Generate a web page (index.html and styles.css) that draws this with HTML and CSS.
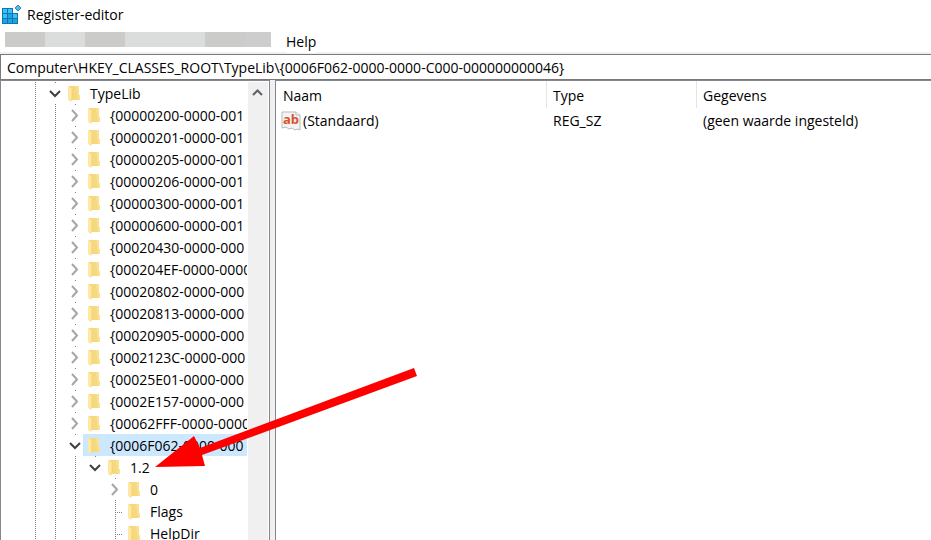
FILE: index.html
```html
<!DOCTYPE html>
<html lang="nl">
<head>
    <meta charset="UTF-8">
    <meta name="viewport" content="width=device-width, initial-scale=1.0">
    <title>Register-editor</title>
    <link rel="stylesheet" href="styles.css">
</head>
<body>

<svg class="defs" width="0" height="0">
    <symbol id="folder" viewBox="0 0 13 17">
        <path d="M1 1H11V10H12V15H4L1 12Z" fill="#f6d87f"/>
        <path d="M8 1H11V10H12V15H10Z" fill="#fae08f"/>
        <path d="M0 1L4 4V12L3 17L0 15Z" fill="#ffe8a2"/>
        <path d="M4 4V12L3 16" fill="none" stroke="#efcb6d" stroke-width="0.6"/>
    </symbol>
    <symbol id="closed" viewBox="0 0 16 20">
        <path d="M5 5L10 10.500L5 16" fill="none" stroke="#a6a6a6" stroke-width="2"/>
    </symbol>
    <symbol id="open" viewBox="0 0 16 20">
        <path d="M3 8L8 13L13 8" fill="none" stroke="#404040" stroke-width="2"/>
    </symbol>
</svg>

<header class="titlebar">
    <svg class="logo" width="20" height="20" viewBox="0 0 20 20">
        <path d="M0 3H11V8H16V19H0Z" fill="#0b78b4"/>
        <path d="M1 4H5V8H1ZM6 4H10V8H6ZM1 9H5V13H1ZM11 9H15V13H11Z" fill="#3fc0f2"/>
        <path d="M6 9H10V13H6ZM1 14H5V18H1ZM6 14H10V18H6ZM11 14H15V18H11Z" fill="#1ea5e0"/>
        <path d="M16 0L19 3L16 6L13 3Z" fill="#5ab6de" stroke="#2a8abd"/>
    </svg>
    <span>Register-editor</span>
</header>

<nav class="menubar">
    <div class="masked">
        <span class="dark"></span>
        <span class="light"></span>
        <span class="dark"></span>
        <span class="light"></span>
        <span class="light"></span>
        <span class="dark"></span>
        <span class="dark end"></span>
    </div>
    <button type="button">Help</button>
</nav>

<input class="address" type="text" aria-label="Adres" value="Computer\HKEY_CLASSES_ROOT\TypeLib\{0006F062-0000-0000-C000-000000000046}">

<main class="panes">
    <div class="tree">
        <ul class="root">
            <li>
                <div class="row"><button class="toggle" aria-label="Samenvouwen"><svg><use href="#open"/></svg></button><span class="label"><svg><use href="#folder"/></svg><span>TypeLib</span></span></div>
                <ul id="keys">
                    <li class="last-key last">
                        <div class="row"><button class="toggle" aria-label="Samenvouwen"><svg><use href="#open"/></svg></button><span class="label"><svg><use href="#folder"/></svg><span>1.2</span></span></div>
                        <ul>
                            <li><div class="row"><button class="toggle" aria-label="Uitvouwen"><svg><use href="#closed"/></svg></button><span class="label"><svg><use href="#folder"/></svg><span>0</span></span></div></li>
                            <li><div class="row"><span class="stub"></span><span class="label"><svg><use href="#folder"/></svg><span>Flags</span></span></div></li>
                            <li><div class="row"><span class="stub"></span><span class="label"><svg><use href="#folder"/></svg><span>HelpDir</span></span></div></li>
                        </ul>
                    </li>
                </ul>
            </li>
        </ul>
        <div class="scrollbar">
            <button type="button" aria-label="Omhoog">
                <svg width="20" height="22" viewBox="0 0 20 22"><path d="M5 13L9.500 8.500L14 13" fill="none" stroke="#606060" stroke-width="2"/></svg>
            </button>
        </div>
    </div>
    <div class="splitter"></div>
    <div class="values">
        <table>
            <thead>
                <tr>
                    <th class="name">Naam</th>
                    <th class="type">Type</th>
                    <th>Gegevens</th>
                </tr>
            </thead>
            <tbody>
                <tr>
                    <td class="value-name">
                        <div>
                            <svg width="20" height="20" viewBox="0 0 20 20">
                                <path d="M1 1H15L19 4V19L16 18L14 19L11 17L8 18L5 16L1 17Z" fill="#f4f4f4" stroke="#b5b9bd"/>
                                <path d="M15 1V4H19" fill="#fff" stroke="#b5b9bd"/>
                                <text x="2" y="13">ab</text>
                            </svg>
                            <span>(Standaard)</span>
                        </div>
                    </td>
                    <td>REG_SZ</td>
                    <td>(geen waarde ingesteld)</td>
                </tr>
            </tbody>
        </table>
    </div>
</main>

<svg class="arrow" width="264" height="102" viewBox="0 0 264 102">
    <path d="M1 99L40 68L46 80L260 0L263 8L48 87L51 98Z" fill="#f00"/>
</svg>

<script>
    const keys = [
        "{00000200-0000-001",
        "{00000201-0000-001",
        "{00000205-0000-001",
        "{00000206-0000-001",
        "{00000300-0000-001",
        "{00000600-0000-001",
        "{00020430-0000-000",
        "{000204EF-0000-0000",
        "{00020802-0000-000",
        "{00020813-0000-000",
        "{00020905-0000-000",
        "{0002123C-0000-000",
        "{00025E01-0000-000",
        "{0002E157-0000-000",
        "{00062FFF-0000-0000",
        "{0006F062-0000-000"
    ];
    const selected = "{0006F062-0000-000";

    function renderKeys() {
        const list = document.getElementById("keys");
        const children = list.querySelector(".last-key");
        list.innerHTML = "";
        keys.forEach(key => {
            const isOpen = key === selected;
            const item = document.createElement("li");
            item.innerHTML = `
                <div class="row">
                    <button class="toggle" aria-label="${isOpen ? "Samenvouwen" : "Uitvouwen"}"><svg><use href="#${isOpen ? "open" : "closed"}"/></svg></button>
                    <span class="label ${isOpen ? "selected" : ""}"><svg><use href="#folder"/></svg><span>${key}</span></span>
                </div>
            `;
            if (isOpen) {
                const sub = document.createElement("ul");
                sub.appendChild(children);
                item.appendChild(sub);
            }
            list.appendChild(item);
        });
    }
    renderKeys();
</script>

</body>
</html>
```
FILE: styles.css
```css
* {
    box-sizing: border-box;
}
body {
    margin: 0;
    height: 100vh;
    display: flex;
    flex-direction: column;
    overflow: hidden;
    position: relative;
    background: white;
    color: #000;
    font-family: "Open Sans", "Noto Sans", sans-serif;
    font-size: 14px;
    line-height: 22px;
}
button, input {
    font: inherit;
    color: inherit;
    border: none;
    padding: 0;
    margin: 0;
    background: white;
}
svg {
    display: block;
    flex: none;
}
.defs {
    position: absolute;
}
.titlebar {
    display: flex;
    align-items: center;
    gap: 5px;
    height: 30px;
    padding-left: 2px;
    flex: none;
}
.menubar {
    display: flex;
    align-items: center;
    gap: 15px;
    height: 24px;
    padding-left: 5px;
    border-bottom: 2px solid #f0f0f0;
    flex: none;
}
.menubar button {
    padding-top: 2px;
}
.masked {
    display: flex;
    height: 15px;
    margin-bottom: 4px;
    border-right: 1px solid #cdcdcd;
}
.masked span {
    width: 40px;
}
.masked .dark {
    background: #cbcbca;
}
.masked .light {
    background: #dbdcdc;
}
.masked .end {
    width: 25px;
    background: #cdcdcd;
}
.address {
    height: 26px;
    padding: 0 6px 0 6px;
    border: 1px solid #7a7a7a;
    border-right: none;
    flex: none;
}
.panes {
    display: flex;
    flex: 1;
    min-height: 0;
    background: #f0f0f0;
}
.tree, .values {
    background: white;
    border: 1px solid #828790;
    border-bottom: none;
    overflow: hidden;
}
.tree {
    display: flex;
    flex: none;
    width: 270px;
    padding: 1px 1px 0 0;
}
.splitter {
    width: 5px;
    cursor: col-resize;
}
.values {
    flex: 1;
    border-right: none;
}

/* dotted guide lines are one dot repeated every two pixels */
.tree ul {
    list-style: none;
    margin: 0;
    padding: 0 0 0 20px;
}
.tree .root {
    flex: 1;
    min-width: 0;
    padding-left: 46px;
    margin-right: 1px;
    overflow: hidden;
}
.tree .root, .tree li {
    background: linear-gradient(#808080 50%, transparent 50%) 8px 0 / 1px 2px repeat-y;
}
.tree .root {
    background-position: 34px 0;
}
.tree .last {
    background: linear-gradient(#808080, #808080) 8px 0 / 1px 1px no-repeat;
}
.row {
    display: flex;
    height: 22px;
    white-space: nowrap;
}
.toggle {
    width: 16px;
    height: 20px;
    margin-top: 1px;
    flex: none;
}
.toggle svg {
    width: 16px;
    height: 20px;
}
.stub {
    width: 16px;
    flex: none;
    background: linear-gradient(90deg, #808080 50%, transparent 50%) 8px 12px / 2px 1px repeat-x;
    background-clip: content-box;
    background-origin: border-box;
    padding-left: 8px;
}
.label {
    display: flex;
    align-items: center;
    flex: 1;
    gap: 9px;
    padding-left: 5px;
}
.label svg {
    width: 13px;
    height: 17px;
}
.label span {
    padding-top: 2px;
}
.selected {
    background: #cce8ff;
}
.scrollbar {
    width: 20px;
    background: #f0f0f0;
    flex: none;
}
.scrollbar button {
    display: block;
    background: transparent;
}

table {
    width: 100%;
    table-layout: fixed;
    border-collapse: separate;
    border-spacing: 0;
}
th, td {
    height: 26px;
    padding: 0 0 0 6px;
    text-align: left;
    font-weight: normal;
}
th {
    height: 27px;
    padding-top: 2px;
}
.name {
    width: 271px;
    padding-left: 7px;
    border-right: 1px solid #e5e5e5;
}
.type {
    width: 150px;
    border-right: 1px solid #e5e5e5;
}
.value-name {
    padding-left: 5px;
}
.value-name div {
    display: flex;
    align-items: center;
    gap: 2px;
}
.value-name text {
    font-size: 13px;
    font-weight: bold;
    fill: #d9532c;
}

.arrow {
    position: absolute;
    left: 154px;
    top: 368px;
    pointer-events: none;
}
```
